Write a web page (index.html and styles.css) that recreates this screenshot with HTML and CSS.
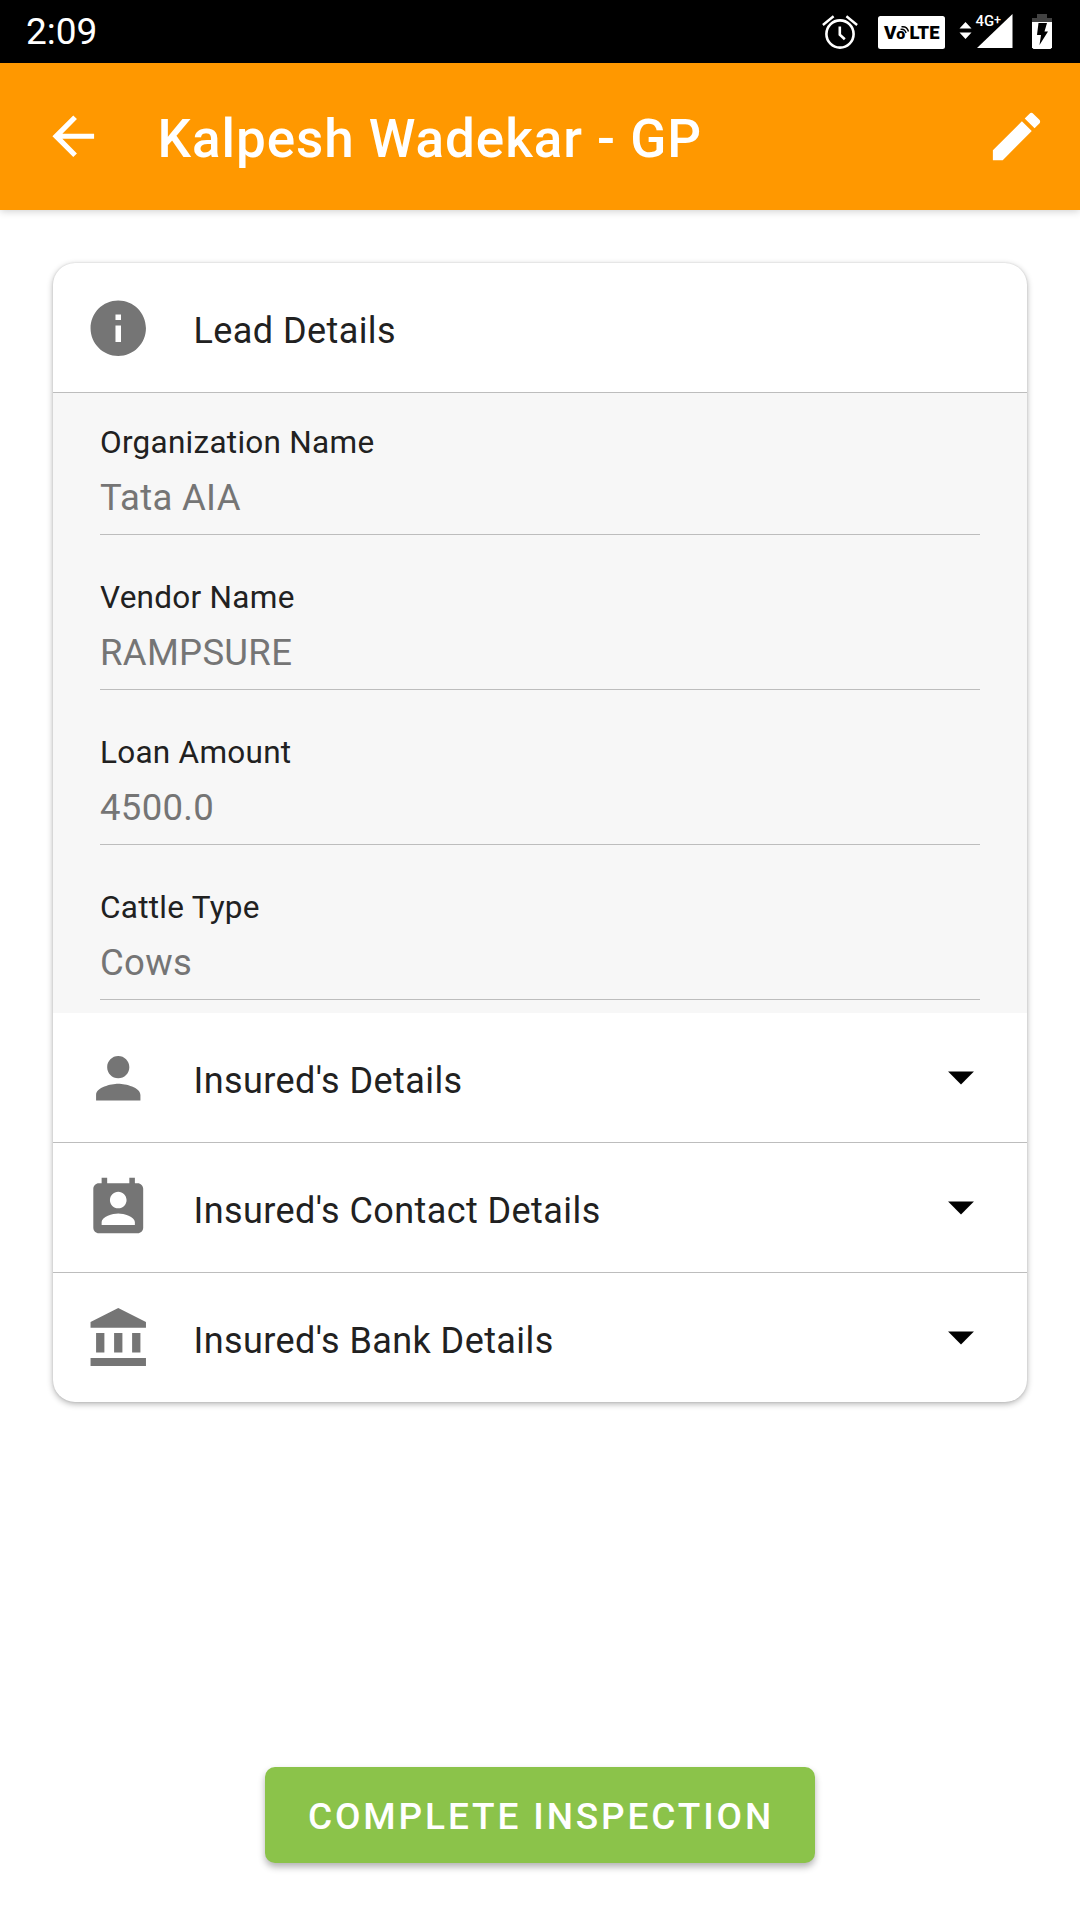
FILE: index.html
```html
<!DOCTYPE html>
<html lang="en">
  <head>
    <meta charset="UTF-8">
    <meta name="viewport" content="width=device-width, initial-scale=1.0">
    <title>Kalpesh Wadekar - GP</title>

    <link rel="stylesheet" href="styles.css">
  </head>
  <body>
    <div class="status-bar">
      <span class="status-bar__time">2:09</span>
      <div class="status-bar__icons">
        <svg class="status-bar__alarm" width="36" height="36" viewBox="0 0 36 36" fill="none" stroke="#fff">
          <circle cx="18" cy="21" r="13.6" stroke-width="2.6" />
          <path d="M17.8 13.500v8.200l5 4.600" stroke-width="2.6" />
          <path d="M.9 12l10.700-8.700M24.400 3.300l10.700 8.700" stroke-width="2.4" />
        </svg>
        <svg class="status-bar__volte" width="67" height="33" viewBox="0 0 67 33">
          <rect width="67" height="33" rx="2.5" fill="#fff" />
          <g class="status-bar__label">
            <text x="6" y="23.3" font-size="18" textLength="12.5" lengthAdjust="spacingAndGlyphs">V</text>
            <text x="18.3" y="23.3" font-size="15" textLength="9" lengthAdjust="spacingAndGlyphs">o</text>
            <text x="31.5" y="23.3" font-size="18" textLength="30" lengthAdjust="spacingAndGlyphs">LTE</text>
          </g>
          <path d="M22.500 13.400q4-1 5.600 3.600M23.500 10.800q5.500-.8 7 4.700" fill="none" stroke="#000" stroke-width="1.4" />
        </svg>
        <svg class="status-bar__signal" width="54" height="36" viewBox="0 0 54 36" fill="#fff">
          <path d="M.5 15.500l6-6.500 6 6.500zM.5 19.500h12l-6 6.500z" />
          <path d="M53.500 1v34H18z" />
          <text class="status-bar__network" x="16.500" y="13" textLength="25.500" lengthAdjust="spacingAndGlyphs">4G<tspan dy="-2.500" font-size="13">+</tspan></text>
        </svg>
        <svg class="status-bar__battery" width="20" height="35" viewBox="0 0 20 35">
          <path d="M5 0h10v4h5v4H0V4h5z" fill="#424242" />
          <path d="M0 8h20v25.500l-1.500 1.500h-17L0 33.500z" fill="#fff" />
          <path d="M6.500 9h8.500l-2.500 8.500H16L7.500 31l1.500-10H5z" fill="#000" />
        </svg>
      </div>
    </div>

    <header class="app-bar">
      <a class="app-bar__back" href="#" aria-label="Back">
        <svg width="62.5" height="62.5" viewBox="0 0 24 24" fill="currentColor">
          <path d="M20 11H7.830l5.590-5.590L12 4l-8 8 8 8 1.410-1.410L7.830 13H20v-2z" />
        </svg>
      </a>
      <h1 class="app-bar__title">Kalpesh Wadekar - GP</h1>
      <a class="app-bar__edit" href="#" aria-label="Edit">
        <svg width="63" height="63" viewBox="0 0 24 24" fill="currentColor">
          <path d="M3 17.250V21h3.750L17.810 9.940l-3.750-3.750L3 17.250zM20.710 7.040c.39-.39.39-1.020 0-1.410l-2.340-2.340c-.39-.39-1.020-.39-1.410 0l-1.830 1.830 3.750 3.750 1.830-1.830z" />
        </svg>
      </a>
    </header>

    <main class="content">
      <section class="card">
        <div class="row">
          <svg class="row__icon" viewBox="0 0 24 24">
            <path d="M12 2C6.480 2 2 6.480 2 12s4.480 10 10 10 10-4.480 10-10S17.520 2 12 2zm1 15h-2v-6h2v6zm0-8h-2V7h2v2z" />
          </svg>
          <h2 class="row__title">Lead Details</h2>
        </div>
        <dl class="fields">
          <div class="field">
            <dt class="field__label">Organization Name</dt>
            <dd class="field__value">Tata AIA</dd>
          </div>
          <div class="field">
            <dt class="field__label">Vendor Name</dt>
            <dd class="field__value">RAMPSURE</dd>
          </div>
          <div class="field">
            <dt class="field__label">Loan Amount</dt>
            <dd class="field__value">4500.0</dd>
          </div>
          <div class="field">
            <dt class="field__label">Cattle Type</dt>
            <dd class="field__value">Cows</dd>
          </div>
        </dl>
        <div class="row">
          <svg class="row__icon" viewBox="0 0 24 24">
            <path d="M12 12c2.210 0 4-1.790 4-4s-1.790-4-4-4-4 1.790-4 4 1.790 4 4 4zm0 2c-2.670 0-8 1.340-8 4v2h16v-2c0-2.660-5.330-4-8-4z" />
          </svg>
          <h2 class="row__title">Insured's Details</h2>
          <svg class="row__arrow" viewBox="0 0 24 24">
            <path d="M7 9.500l5 5 5-5z" />
          </svg>
        </div>
        <div class="row">
          <svg class="row__icon" viewBox="0 0 24 24">
            <path d="M19 3h-1V1h-2v2H8V1H6v2H5c-1.110 0-2 .9-2 2v14c0 1.100.89 2 2 2h14c1.100 0 2-.9 2-2V5c0-1.100-.9-2-2-2zm-7 3c1.660 0 3 1.340 3 3s-1.340 3-3 3-3-1.340-3-3 1.340-3 3-3zm6 12H6v-1c0-2 4-3.100 6-3.100s6 1.100 6 3.100v1z" />
          </svg>
          <h2 class="row__title">Insured's Contact Details</h2>
          <svg class="row__arrow" viewBox="0 0 24 24">
            <path d="M7 9.500l5 5 5-5z" />
          </svg>
        </div>
        <div class="row">
          <svg class="row__icon" viewBox="0 0 24 24">
            <path d="M12 1.100L2 6.100v2.100h20V6.100zM4 10.100v7h3v-7zM10.500 10.100v7h3v-7zM17 10.100v7h3v-7zM2 19.100v2.900h20v-2.900z" />
          </svg>
          <h2 class="row__title">Insured's Bank Details</h2>
          <svg class="row__arrow" viewBox="0 0 24 24">
            <path d="M7 9.500l5 5 5-5z" />
          </svg>
        </div>
      </section>

      <button class="button" type="button">Complete Inspection</button>
    </main>
  </body>
</html>
```
FILE: styles.css
```css
:root {
  --orange: #ff9800;
  --green: #8bc34a;
  --text: #212121;
  --text-muted: #757575;
  --divider: #bdbdbd;
  --panel: #f7f7f7;
}

*, *::before, *::after {
  box-sizing: border-box;
}

body {
  display: flex;
  flex-direction: column;
  min-height: 1920px;
  margin: 0;
  background-color: #fff;
  font-family: Roboto, sans-serif;
  color: var(--text);
}

h1, h2, dl, dd {
  margin: 0;
  font-weight: 400;
}

svg {
  display: block;
  flex: none;
}

/* Status bar */
.status-bar {
  display: flex;
  justify-content: space-between;
  height: 63px;
  padding: 0 28px 0 26px;
  background-color: #000;
  color: #fff;
}

.status-bar__time {
  font-size: 37px;
  line-height: 63px;
}

.status-bar__icons {
  display: flex;
  align-items: flex-start;
  padding-top: 13px;
}

.status-bar__alarm {
  margin-right: 20px;
}

.status-bar__volte {
  margin-top: 3px;
  margin-right: 14px;
}

.status-bar__label {
  font-weight: 900;
}

.status-bar__signal {
  margin-right: 19px;
  overflow: visible;
}

.status-bar__network {
  font-size: 15.5px;
  font-weight: 500;
}

.status-bar__battery {
  margin-top: 1px;
}

/* App bar */
.app-bar {
  display: flex;
  align-items: center;
  height: 147px;
  padding: 0 32px 0 42px;
  background-color: var(--orange);
  box-shadow: 0 1px 8px rgba(0, 0, 0, 0.2);
  color: #fff;
}

.app-bar__back,
.app-bar__edit {
  color: inherit;
}

.app-bar__title {
  flex: 1;
  padding: 5px 0 0 53px;
  font-size: 53px;
  font-weight: 500;
  letter-spacing: 0.95px;
}

/* Content */
.content {
  display: flex;
  flex: 1;
  flex-direction: column;
  align-items: center;
  justify-content: space-between;
  padding: 53px 53px 57px;
}

.card {
  width: 100%;
  border-radius: 22px;
  background-color: #fff;
  box-shadow: 0 2px 6px rgba(0, 0, 0, 0.3), 0 0 2px rgba(0, 0, 0, 0.12);
  overflow: hidden;
}

.row {
  display: flex;
  align-items: center;
  height: 130px;
  padding: 1px 35px 0 32px;
  border-bottom: 1px solid var(--divider);
}

.row:last-child {
  height: 129px;
  border-bottom: 0;
}

.row__icon {
  width: 66.5px;
  height: 66.5px;
  fill: var(--text-muted);
}

.row__title {
  flex: 1;
  padding: 6px 0 0 42px;
  font-size: 36px;
  letter-spacing: 0.42px;
}

.row__arrow {
  width: 62px;
  height: 62px;
}

.fields {
  height: 620px;
  padding: 0 47px;
  background-color: var(--panel);
}

.field {
  height: 155px;
  border-bottom: 1px solid var(--divider);
  padding-top: 43px;
}

.field:first-child {
  height: 142px;
  padding-top: 30px;
}

.field__label {
  font-size: 31.5px;
  line-height: 40px;
  letter-spacing: 0.27px;
}

.field__value {
  padding-top: 13px;
  font-size: 36.5px;
  line-height: 44px;
  letter-spacing: 0.3px;
  color: var(--text-muted);
}

.button {
  width: 550px;
  height: 96px;
  padding: 3px 0 0 2px;
  border: 0;
  border-radius: 10px;
  background-color: var(--green);
  box-shadow: 0 4px 7px rgba(0, 0, 0, 0.3);
  font: 500 37px Roboto, sans-serif;
  letter-spacing: 2.87px;
  text-transform: uppercase;
  color: #fff;
}
```
